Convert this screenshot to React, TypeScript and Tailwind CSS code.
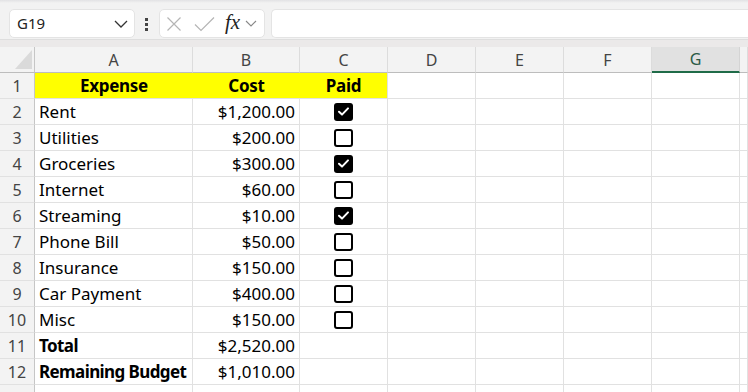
import React from "react";

const FONT = { fontFamily: '"Noto Sans", "Open Sans", Arial, sans-serif' };

type Row = { a: string; b: string; c?: boolean | null; bold?: boolean };

const rows: Row[] = [
  { a: "Rent", b: "$1,200.00", c: true },
  { a: "Utilities", b: "$200.00", c: false },
  { a: "Groceries", b: "$300.00", c: true },
  { a: "Internet", b: "$60.00", c: false },
  { a: "Streaming", b: "$10.00", c: true },
  { a: "Phone Bill", b: "$50.00", c: false },
  { a: "Insurance", b: "$150.00", c: false },
  { a: "Car Payment", b: "$400.00", c: false },
  { a: "Misc", b: "$150.00", c: false },
  { a: "Total", b: "$2,520.00", c: null, bold: true },
  { a: "Remaining Budget", b: "$1,010.00", c: null, bold: true },
];

function Checkbox({ checked }: { checked: boolean }) {
  if (checked) {
    return (
      <div className="w-[19px] h-[18px] rounded-[3px] bg-black flex items-center justify-center">
        <svg width="13" height="11" viewBox="0 0 13 11">
          <path d="M2 5.8 L5 8.6 L11 2.4" fill="none" stroke="white" strokeWidth="2" strokeLinecap="round" strokeLinejoin="round" />
        </svg>
      </div>
    );
  }
  return <div className="w-[19px] h-[18px] rounded-[3px] border-2 border-black bg-white" />;
}

const cell = "h-[26px] border-r border-b border-[#e1e1e1] bg-white";
const rowHead =
  "h-[26px] border-r border-b border-r-[#c6c6c6] border-b-[#e1e1e1] bg-[#f3f3f3] flex items-center justify-center text-[16px] text-[#444]";

export default function App() {
  const cols = ["A", "B", "C", "D", "E", "F", "G", ""];
  return (
    <div className="w-[748px] h-[392px] overflow-hidden bg-white text-black" style={FONT}>
      {/* toolbar */}
      <div className="h-[39px] bg-[#f2f2f2] relative flex items-start pt-[9px]">
        <div className="absolute top-0 left-0 right-0 h-[3px] bg-gradient-to-b from-[#e2e2e4] to-[#f2f2f2]" />
        <div className="ml-[9px] w-[126px] h-[29px] rounded-[5px] bg-white border border-[#e4e4e4] flex items-center justify-between pl-[7px] pr-[6px]">
          <span className="text-[15px] text-[#222]">G19</span>
          <svg width="14" height="8" viewBox="0 0 14 8">
            <path d="M1 1 L7 7 L13 1" fill="none" stroke="#333" strokeWidth="1.3" />
          </svg>
        </div>
        <div className="ml-[10px] mt-[9px] flex flex-col gap-[2px]">
          <div className="w-[3px] h-[3px] bg-[#444]" />
          <div className="w-[3px] h-[3px] bg-[#444]" />
          <div className="w-[3px] h-[3px] bg-[#444]" />
        </div>
        <div className="ml-[11px] w-[106px] h-[29px] rounded-[5px] bg-white border border-[#e4e4e4] flex items-center pl-[6px]">
          <svg width="16" height="16" viewBox="0 0 16 16">
            <path d="M1.5 1.5 L14.5 14.5 M14.5 1.5 L1.5 14.5" stroke="#b5b5b5" strokeWidth="1.2" />
          </svg>
          <svg className="ml-[12px]" width="21" height="16" viewBox="0 0 21 16">
            <path d="M1 8.5 L7 14.5 L20 1.5" fill="none" stroke="#b5b5b5" strokeWidth="1.2" />
          </svg>
          <span
            className="ml-[10px] text-[21px] italic leading-none text-[#222] -mt-[3px]"
            style={{ fontFamily: '"Liberation Serif", "DejaVu Serif", serif' }}
          >
            fx
          </span>
          <svg className="ml-[5px]" width="12" height="7" viewBox="0 0 12 7">
            <path d="M1 1 L6 6 L11 1" fill="none" stroke="#888" strokeWidth="1.1" />
          </svg>
        </div>
        <div className="ml-[6px] flex-1 h-[29px] rounded-l-[5px] bg-white border border-r-0 border-[#e4e4e4]" />
      </div>
      <div className="h-[8px] bg-[#ebe9e9] border-t border-[#dedede]" />

      {/* grid */}
      <div className="grid grid-cols-[35px_158px_107px_88px_88px_88px_88px_88px_1fr]">
        {/* header row */}
        <div className="h-[26px] bg-[#f3f3f3] border-r border-b border-r-[#c6c6c6] border-b-[#bdbdbd] relative">
          <svg className="absolute left-[15px] top-[3px]" width="17" height="19" viewBox="0 0 17 19">
            <path d="M17 0 L17 19 L0 19 Z" fill="#dadada" />
          </svg>
        </div>
        {cols.map((c, i) => (
          <div
            key={i}
            className={
              c === "G"
                ? "h-[26px] bg-[#e1e1e1] border-r border-r-[#d4d4d4] border-b-2 border-b-[#1f6b48] flex items-center justify-center text-[16px] text-[#2b5a45]"
                : "h-[26px] bg-[#f3f3f3] border-r border-r-[#dcdcdc] border-b border-b-[#bdbdbd] flex items-center justify-center text-[16px] text-[#444]"
            }
          >
            {c}
          </div>
        ))}

        {/* row 1 */}
        <div className={rowHead}>1</div>
        <div className="h-[26px] bg-[#ffff00] border-b border-[#e1e1e1] flex items-center justify-center font-bold text-[17px] tracking-[-0.3px]">Expense</div>
        <div className="h-[26px] bg-[#ffff00] border-b border-[#e1e1e1] flex items-center justify-center font-bold text-[17px] tracking-[-0.3px]">Cost</div>
        <div className="h-[26px] bg-[#ffff00] border-b border-r border-[#e1e1e1] flex items-center justify-center font-bold text-[17px] tracking-[-0.3px]">Paid</div>
        {[0, 1, 2, 3, 4].map((k) => (
          <div key={k} className={cell} />
        ))}

        {rows.map((r, idx) => (
          <React.Fragment key={idx}>
            <div className={rowHead}>{idx + 2}</div>
            <div
              className={`${cell} flex items-center pl-[4px] text-[17px] whitespace-nowrap overflow-hidden ${
                r.bold ? "font-bold tracking-[-0.6px]" : ""
              }`}
            >
              {r.a}
            </div>
            <div className={`${cell} flex items-center justify-end pr-[4px] text-[17px]`}>{r.b}</div>
            <div className={`${cell} flex items-center justify-center`}>
              {r.c === null || r.c === undefined ? null : <Checkbox checked={r.c} />}
            </div>
            {[0, 1, 2, 3, 4].map((k) => (
              <div key={k} className={cell} />
            ))}
          </React.Fragment>
        ))}

        {/* row 13 partial */}
        <div className={rowHead}>13</div>
        {[0, 1, 2, 3, 4, 5, 6, 7].map((k) => (
          <div key={k} className={cell} />
        ))}
      </div>
    </div>
  );
}
